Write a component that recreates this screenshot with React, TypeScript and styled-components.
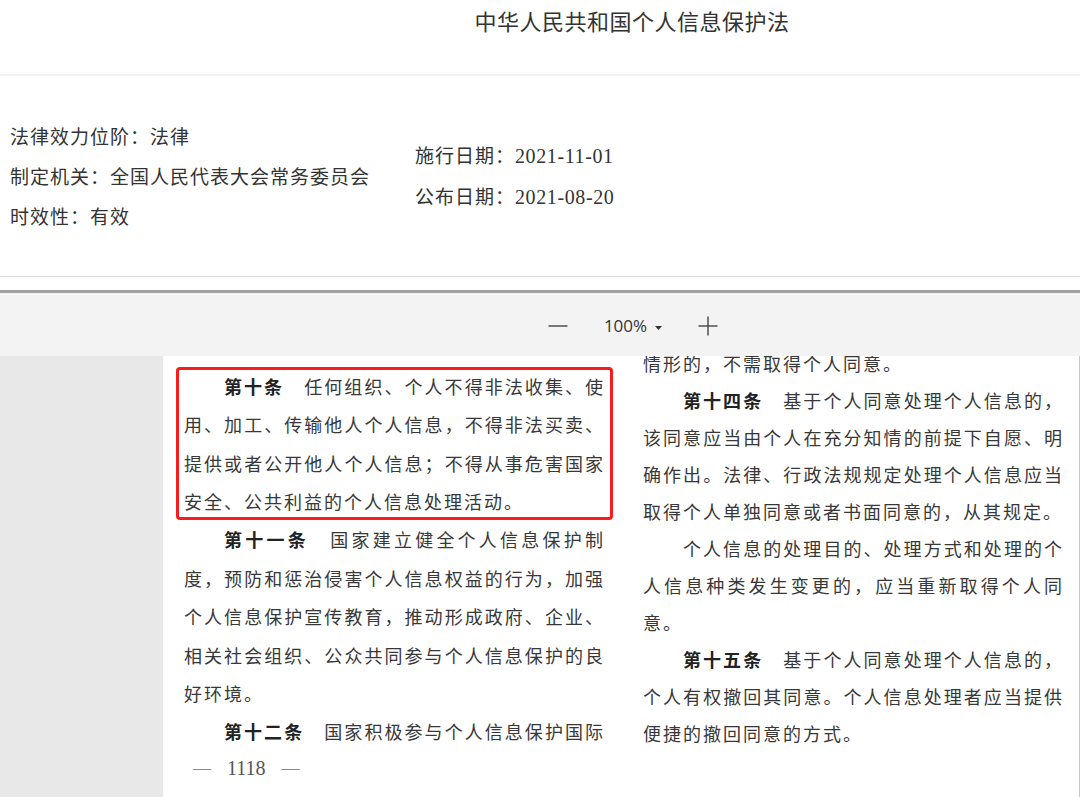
import React from "react";
import styled, { createGlobalStyle } from "styled-components";

const GlobalStyle = createGlobalStyle`
  *, *::before, *::after { box-sizing: border-box; }
  html, body { margin: 0; padding: 0; background: #fff; }
  body {
    font-family: "Noto Sans CJK SC", "Noto Sans", sans-serif;
    color: #333;
  }
`;

const Shell = styled.div`
  display: flex;
  flex-direction: column;
  height: 100vh;
  overflow: hidden;
`;

const Header = styled.header`
  height: 76px;
  padding: 6px 0 0 184px;
  border-bottom: 2px solid #f3f3f3;
`;

const Title = styled.h1`
  margin: 0;
  font-size: 22px;
  line-height: 28px;
  font-weight: 400;
  letter-spacing: 0.5px;
  text-align: center;
  color: #333;
`;

const Meta = styled.section`
  height: 201px;
  display: grid;
  grid-template-columns: 405px auto;
  align-items: center;
  padding-left: 10px;
  border-bottom: 1px solid #d9d9d9;
  font-size: 19px;
  letter-spacing: 1px;
  color: #333;
`;

const MetaList = styled.div`
  display: flex;
  flex-direction: column;
`;

const MetaLine = styled.div`
  line-height: 40px;
  white-space: nowrap;
`;

const DateNum = styled.span`
  font-family: "Liberation Serif", serif;
  font-size: 20px;
  letter-spacing: 0.6px;
`;

const Spacer = styled.div`
  height: 13px;
  flex-shrink: 0;
`;

const Toolbar = styled.div`
  height: 66px;
  flex-shrink: 0;
  border-top: 3px solid #a0a0a0;
  background: #f3f3f3;
  display: flex;
  align-items: center;
  justify-content: center;
  gap: 36px;
  padding: 2px 0 0 186px;
  color: #333;
`;

const ZoomSelect = styled.div`
  display: flex;
  align-items: center;
  gap: 8px;
  font-family: "Open Sans", "Liberation Sans", sans-serif;
  font-size: 17px;
  line-height: 24px;
`;

const Caret = styled.svg`
  margin-top: 5px;
`;

const Viewer = styled.div`
  flex: 1;
  min-height: 0;
  display: flex;
  overflow: hidden;
  background: #e8e8e8;
`;

const Sidebar = styled.aside`
  width: 163px;
  flex-shrink: 0;
  background: #e8e8e8;
`;

const Page = styled.main`
  flex: 1;
  display: flex;
  align-items: flex-start;
  gap: 38px;
  padding-left: 21px;
  background: #fff;
  border-right: 1px solid #c8c8c8;
  overflow: hidden;
`;

const Column = styled.div<{ $lh: number; $offset: number }>`
  width: 421px;
  flex-shrink: 0;
  margin-top: ${(p) => p.$offset}px;
  font-size: 18px;
  letter-spacing: 2px;
  line-height: ${(p) => p.$lh}px;
  color: #383838;
  text-spacing-trim: space-all;
`;

const Para = styled.div``;

const Highlight = styled.div`
  margin: 0 -8px;
  padding: 0 8px;
  border-radius: 4px;
  box-shadow: inset 0 0 0 3px #f81d1d;
`;

const Line = styled.div<{ $indent?: boolean; $last?: boolean }>`
  text-align: ${(p) => (p.$last ? "left" : "justify")};
  text-align-last: ${(p) => (p.$last ? "left" : "justify")};
  text-indent: ${(p) => (p.$indent ? "40px" : "0")};
`;

const Article = styled.strong`
  font-weight: 700;
  color: #222;
`;

const PageNo = styled.div`
  display: flex;
  align-items: center;
  gap: 16px;
  padding-left: 9px;
  line-height: 34px;
  font-family: "Liberation Serif", serif;
  font-size: 20px;
  letter-spacing: 0;
  color: #555;
`;

const Dash = styled.span`
  font-size: 18px;
  color: #888;
`;

const Minus = () => (
  <svg width="20" height="20" viewBox="0 0 20 20" aria-hidden="true">
    <line x1="0.5" y1="10" x2="19.5" y2="10" stroke="#444" strokeWidth="1.4" />
  </svg>
);

const Plus = () => (
  <svg width="20" height="20" viewBox="0 0 20 20" aria-hidden="true">
    <line x1="0.5" y1="10" x2="19.5" y2="10" stroke="#444" strokeWidth="1.4" />
    <line x1="10" y1="0.5" x2="10" y2="19.5" stroke="#444" strokeWidth="1.4" />
  </svg>
);

const S = "\u3000";

export default function App() {
  return (
    <Shell>
      <GlobalStyle />
      <Header>
        <Title>中华人民共和国个人信息保护法</Title>
      </Header>
      <Meta>
        <MetaList>
          <MetaLine>法律效力位阶：法律</MetaLine>
          <MetaLine>制定机关：全国人民代表大会常务委员会</MetaLine>
          <MetaLine>时效性：有效</MetaLine>
        </MetaList>
        <MetaList>
          <MetaLine>
            施行日期：<DateNum>2021-11-01</DateNum>
          </MetaLine>
          <MetaLine>
            公布日期：<DateNum>2021-08-20</DateNum>
          </MetaLine>
        </MetaList>
      </Meta>
      <Spacer />
      <Toolbar>
        <Minus />
        <ZoomSelect>
          <span>100%</span>
          <Caret width="7" height="4" viewBox="0 0 7 4" aria-hidden="true">
            <polygon points="0,0 7,0 3.5,4" fill="#333" />
          </Caret>
        </ZoomSelect>
        <Plus />
      </Toolbar>
      <Viewer>
        <Sidebar />
        <Page>
          <Column $lh={38.4} $offset={10.8}>
            <Highlight>
              <Line $indent>
                <Article>第十条</Article>
                {S}任何组织、个人不得非法收集、使
              </Line>
              <Line>用、加工、传输他人个人信息，不得非法买卖、</Line>
              <Line>提供或者公开他人个人信息；不得从事危害国家</Line>
              <Line $last>安全、公共利益的个人信息处理活动。</Line>
            </Highlight>
            <Para>
              <Line $indent>
                <Article>第十一条</Article>
                {S}国家建立健全个人信息保护制
              </Line>
              <Line>度，预防和惩治侵害个人信息权益的行为，加强</Line>
              <Line>个人信息保护宣传教育，推动形成政府、企业、</Line>
              <Line>相关社会组织、公众共同参与个人信息保护的良</Line>
              <Line $last>好环境。</Line>
            </Para>
            <Para>
              <Line $indent>
                <Article>第十二条</Article>
                {S}国家积极参与个人信息保护国际
              </Line>
            </Para>
            <PageNo>
              <Dash>—</Dash>
              <span>1118</span>
              <Dash>—</Dash>
            </PageNo>
          </Column>
          <Column $lh={37} $offset={-11.5}>
            <Para>
              <Line $last>情形的，不需取得个人同意。</Line>
            </Para>
            <Para>
              <Line $indent>
                <Article>第十四条</Article>
                {S}基于个人同意处理个人信息的，
              </Line>
              <Line>该同意应当由个人在充分知情的前提下自愿、明</Line>
              <Line>确作出。法律、行政法规规定处理个人信息应当</Line>
              <Line $last>取得个人单独同意或者书面同意的，从其规定。</Line>
            </Para>
            <Para>
              <Line $indent>个人信息的处理目的、处理方式和处理的个</Line>
              <Line>人信息种类发生变更的，应当重新取得个人同</Line>
              <Line $last>意。</Line>
            </Para>
            <Para>
              <Line $indent>
                <Article>第十五条</Article>
                {S}基于个人同意处理个人信息的，
              </Line>
              <Line>个人有权撤回其同意。个人信息处理者应当提供</Line>
              <Line $last>便捷的撤回同意的方式。</Line>
            </Para>
          </Column>
        </Page>
      </Viewer>
    </Shell>
  );
}
